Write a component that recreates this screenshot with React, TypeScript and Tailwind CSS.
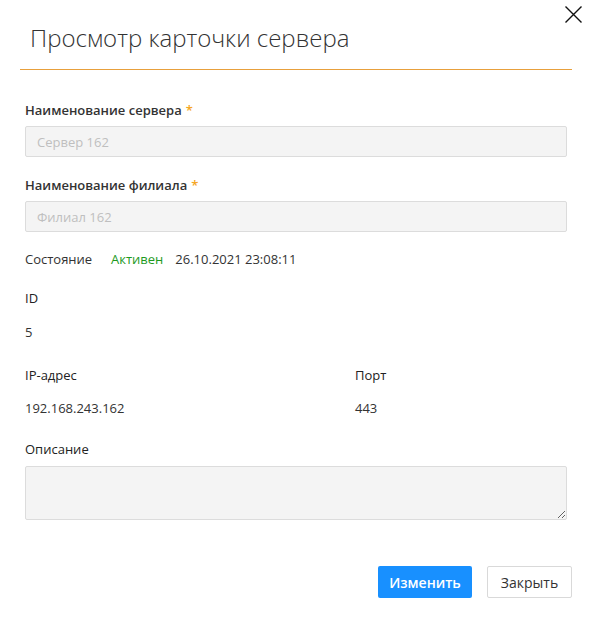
import React from 'react';

const font = { fontFamily: '"Open Sans", "Noto Sans", sans-serif' };

function Label({ text, required, bold }: { text: string; required?: boolean; bold?: boolean }) {
  return (
    <div className={`text-[13px] leading-5 ${bold ? 'font-semibold text-[#333]' : 'font-medium text-[#222]'}`}>
      {text}
      {required && <span className="ml-1 text-[#f5a623]">*</span>}
    </div>
  );
}

function ReadonlyInput({ value }: { value: string }) {
  return (
    <input
      readOnly
      placeholder={value}
      className="mt-[6px] block h-[31px] w-full rounded-[2px] border border-[#dcdcdc] bg-[#f4f4f4] px-[11px] text-[13px] text-[#333] outline-none placeholder:text-[#bfbfbf]"
    />
  );
}

export default function App() {
  return (
    <div className="relative min-h-[623px] w-[595px] bg-white" style={font}>
      {/* Закрыть */}
      <button className="absolute left-[564px] top-[5px] h-[19px] w-[19px]">
        <svg width="19" height="19" viewBox="0 0 19 19">
          <path d="M1.5 1.5 L17.5 17.5 M17.5 1.5 L1.5 17.5" stroke="#111" strokeWidth="1.4" />
        </svg>
      </button>

      {/* Заголовок */}
      <div className="pt-[22px]">
        <h1 className="pl-[30px] text-[24px] leading-[32px] font-light text-[#333]">
          Просмотр карточки сервера
        </h1>
        <div className="ml-[20px] mr-[23px] mt-[15px] h-px bg-[#e8a03c]" />
      </div>

      {/* Форма */}
      <div className="pl-[25px] pr-[28px]">
        <div className="mt-[30px]">
          <Label text="Наименование сервера" required bold />
          <ReadonlyInput value="Сервер 162" />
        </div>

        <div className="mt-[18px]">
          <Label text="Наименование филиала" required bold />
          <ReadonlyInput value="Филиал 162" />
        </div>

        <div className="mt-[17px] flex text-[13px] leading-5 text-[#333]">
          <span className="w-[86px]">Состояние</span>
          <span className="text-[#1e9a1e]">Активен</span>
          <span className="ml-3">26.10.2021 23:08:11</span>
        </div>

        <div className="mt-[19px]">
          <Label text="ID" />
          <div className="mt-[14px] text-[13px] leading-5 text-[#333]">5</div>
        </div>

        <div className="mt-[23px] grid grid-cols-[330px_1fr]">
          <div>
            <Label text="IP-адрес" />
            <div className="mt-[13px] text-[13px] leading-5 text-[#333]">192.168.243.162</div>
          </div>
          <div>
            <Label text="Порт" />
            <div className="mt-[13px] text-[13px] leading-5 text-[#333]">443</div>
          </div>
        </div>

        <div className="mt-[21px]">
          <Label text="Описание" />
          <textarea
            readOnly
            className="mt-[7px] block h-[54px] w-full resize-y rounded-[2px] border border-[#dcdcdc] bg-[#f4f4f4] outline-none"
          />
        </div>
      </div>

      {/* Кнопки */}
      <div className="mt-[46px] flex justify-end gap-[15px] pr-[23px]">
        <button className="h-[32px] w-[94px] rounded-[2px] bg-[#1890ff] text-[14px] font-semibold text-white">
          Изменить
        </button>
        <button className="h-[32px] w-[85px] rounded-[2px] border border-[#d9d9d9] bg-white text-[14px] text-[#333]">
          Закрыть
        </button>
      </div>
    </div>
  );
}
